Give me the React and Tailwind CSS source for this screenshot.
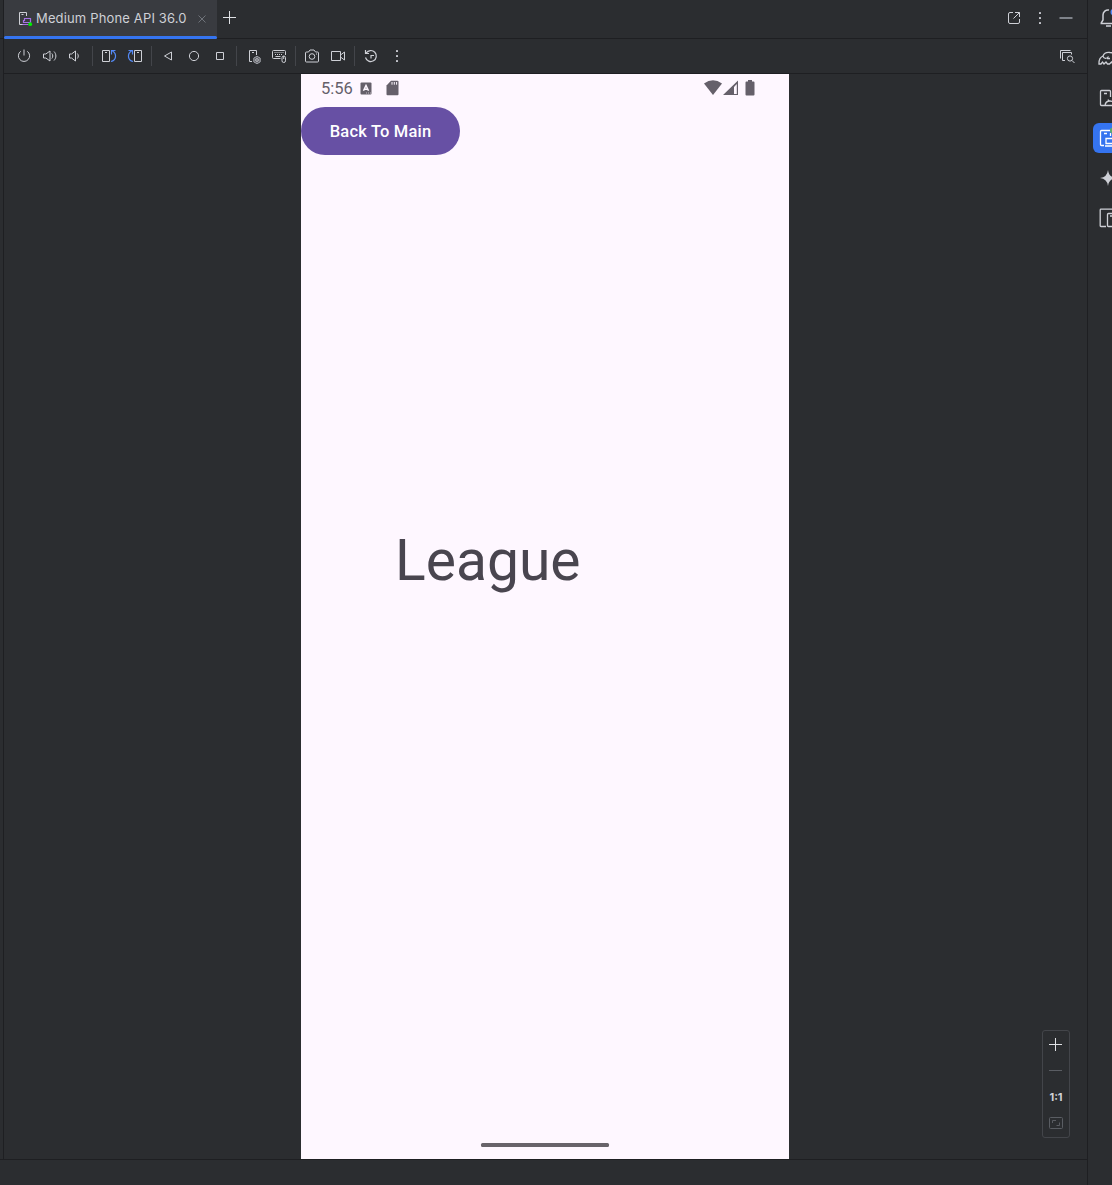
function Icon({ children, size = 16, color = "text-[#ced0d6]", className = "" }) {
  return (
    <svg
      width={size}
      height={size}
      viewBox={`0 0 ${size} ${size}`}
      fill="none"
      stroke="currentColor"
      strokeWidth="1"
      className={`block shrink-0 ${color} ${className}`}
    >
      {children}
    </svg>
  );
}

function Separator() {
  return <div className="mx-2 h-5 w-px shrink-0 bg-[#43454a]" />;
}

function Group({ children }) {
  return <div className="flex items-center gap-2.5">{children}</div>;
}

function DotsVertical() {
  return (
    <Icon>
      <g fill="currentColor" stroke="none">
        <rect x="7" y="2" width="2" height="2" rx=".4" />
        <rect x="7" y="7" width="2" height="2" rx=".4" />
        <rect x="7" y="12" width="2" height="2" rx=".4" />
      </g>
    </Icon>
  );
}

function TabBar() {
  return (
    <div className="flex h-[39px] items-start border-b border-[#1e1f22]">
      <div className="relative flex h-[39px] w-[213px] shrink-0 items-start bg-[#393b40] pl-[13px] pt-[10px]">
        <Icon className="mt-px">
          <path d="M6 13.500H2.500v-12h7V5M4.500 3.500h2" />
          <path d="M7.500 7.500h6v4h-7v-2h1zM5.500 13.500h6" stroke="#a571e6" strokeWidth="1.200" />
          <circle cx="13.200" cy="13.200" r="1.900" fill="#00f000" stroke="none" />
        </Icon>
        <span className="ml-[3px] w-[155px] whitespace-nowrap font-['Inter',sans-serif] text-[13px] leading-4 tracking-[0.150px] text-[#ced0d6]">
          Medium Phone API 36.0
        </span>
        <Icon className="ml-[3px] mt-px" color="text-[#6f737a]">
          <path d="M4.500 4.500l7 7M11.500 4.500l-7 7" />
        </Icon>
        <div className="absolute inset-x-0 bottom-0 h-[3px] rounded-full bg-[#3574f0]" />
      </div>
      <Icon className="ml-[5px] mt-[10px]" color="text-[#dfe1e5]">
        <path d="M7.500 1v13M1 7.500h13" />
      </Icon>
      <div className="ml-auto mr-[13px] mt-[10px] flex gap-2.5">
        <Icon>
          <path d="M7 2.500H4A1.500 1.500 0 0 0 2.500 4v8A1.500 1.500 0 0 0 4 13.500h8a1.500 1.500 0 0 0 1.500-1.500V9M9 2.500h4.500V7M13.500 2.500l-6 6" />
        </Icon>
        <DotsVertical />
        <Icon color="text-[#9da0a8]">
          <path d="M1.500 8h13" strokeWidth="1.5" />
        </Icon>
      </div>
    </div>
  );
}

function Toolbar() {
  return (
    <div className="flex h-[35px] items-center border-b border-[#1e1f22] pl-3 pr-3">
      <Group>
        <Icon>
          <path d="M4.700 3.300a5.600 5.600 0 1 0 6.600 0M8 1.500v6" />
        </Icon>
        <Icon>
          <path d="M1.500 6v4h2.300L8 13V3L3.800 6zM9.800 5.500c1.300 1.500 1.300 3.500 0 5M12 3.500c2.500 2.700 2.500 6.300 0 9" />
        </Icon>
        <Icon>
          <path d="M1.500 6v4h2l4 3V3l-4 3zM9.300 5.500c1.300 1.500 1.300 3.500 0 5" />
        </Icon>
      </Group>
      <Separator />
      <Group>
        <Icon>
          <path d="M1.500 2.500h7v11h-7zM4 4.500h2" />
          <path d="M10 13.500c5.500-1.500 6-7.500 1.500-10.500M10.500 6.500V2.500h4" stroke="#548af7" strokeWidth="1.200" />
        </Icon>
        <Icon>
          <path d="M7.500 2.500h7v11h-7zM10 4.500h2" />
          <path d="M6 13.500C.5 12 0 6 4.500 3M5.500 6.500V2.500h-4" stroke="#548af7" strokeWidth="1.200" />
        </Icon>
      </Group>
      <Separator />
      <Group>
        <Icon><path d="M4.500 8l7-4v8z" /></Icon>
        <Icon><circle cx="8" cy="8" r="4.600" /></Icon>
        <Icon><path d="M4.500 4.500h7v7h-7z" /></Icon>
      </Group>
      <Separator />
      <Group>
        <Icon>
          <path d="M7 13.500H4.500v-11h7V7M7 4.500h2" />
          <path d="M12 8.300l3.200 1.800v3.800L12 15.700l-3.200-1.800v-3.800z" fill="#606268" stroke="#a2a4aa" />
          <circle cx="12" cy="12" r="1.300" fill="#2b2d30" />
        </Icon>
        <Icon>
          <path d="M9.500 10.500h-7a1 1 0 0 1-1-1v-6a1 1 0 0 1 1-1h11a1 1 0 0 1 1 1V7" />
          <path d="M3.500 4.500h9M4 6.500h8" strokeDasharray="1 1" />
          <path d="M4.500 8.500h5" />
          <rect x="11" y="8" width="3.500" height="6.500" rx="1.700" />
          <path d="M12.700 8v3" />
        </Icon>
      </Group>
      <Separator />
      <Group>
        <Icon>
          <path d="M1.500 5a1 1 0 0 1 1-1h2l1.500-2h4l1.500 2h2a1 1 0 0 1 1 1v8a1 1 0 0 1-1 1h-11a1 1 0 0 1-1-1z" />
          <circle cx="8" cy="8.500" r="2.800" />
          <path d="M12 6h1" />
        </Icon>
        <Icon>
          <path d="M1.500 3.500h9v9h-9zM10.500 7l4-3v8l-4-3" />
        </Icon>
      </Group>
      <Separator />
      <Group>
        <Icon>
          <path d="M3.200 5a5.500 5.500 0 1 1-.7 4.500M2.500 2v3.500H6M8 10.500v-3h3" strokeWidth="1.200" />
        </Icon>
        <DotsVertical />
      </Group>
      <Icon className="ml-auto">
        <path d="M1.500 10.500v-8h10M6 12.500H3.500v-8h9v2" />
        <circle cx="11" cy="10.500" r="2.600" />
        <path d="M13 12.500l2.500 2.500" />
      </Icon>
    </div>
  );
}

function StatusBar() {
  return (
    <div className="flex h-[33px] items-start pl-5 pr-[34px] pt-[6px] text-[#65606a]">
      <span className="w-[33px] whitespace-nowrap font-['Roboto',sans-serif] text-[16.500px] leading-[18px]">
        5:56
      </span>
      <svg width="12" height="13" viewBox="0 0 12 13" className="ml-[6px] mt-[2px]">
        <rect x=".5" y=".5" width="11" height="12" rx="1" fill="currentColor" />
        <path d="M3.500 8.800L6 3.500l2.500 5.300M4.500 7.300h3" fill="none" stroke="#fef7ff" strokeWidth="1.500" />
        <path d="M6 11h5" stroke="#fef7ff" strokeWidth=".6" strokeDasharray="1 1" />
      </svg>
      <svg width="13" height="16" viewBox="0 0 13 16" className="ml-[14px]">
        <path d="M5 .8h6.500q1 0 1 1v12.400q0 1-1 1h-10q-1 0-1-1V5.500z" fill="currentColor" />
        <path d="M6 2v2.700M8.300 2v2.700M10.600 2v2.700" stroke="#fef7ff" strokeWidth="1" />
      </svg>
      <svg width="18" height="16" viewBox="0 0 18 16" className="ml-auto">
        <path d="M0 3.500Q9-3 18 3.500L9 15z" fill="currentColor" />
      </svg>
      <svg width="16" height="16" viewBox="0 0 16 16" className="ml-px">
        <path d="M15 .5V15H0zM11 7v7h2.800V4z" fill="currentColor" fillRule="evenodd" />
      </svg>
      <svg width="10" height="16" viewBox="0 0 10 16" className="ml-[6px]">
        <path d="M3 0h4v1.500h1.500q1 0 1 1v12q0 1-1 1h-7q-1 0-1-1v-12q0-1 1-1H3z" fill="currentColor" />
      </svg>
    </div>
  );
}

function PhoneScreen() {
  return (
    <div className="flex h-[1085px] w-[488px] flex-col bg-[#fef7ff]">
      <StatusBar />
      <button className="flex h-12 w-[159px] items-center justify-center rounded-full bg-[#6750a4] pt-[2px] font-['Roboto',sans-serif] text-[16.500px] font-medium tracking-[0.180px] text-white">
        Back To Main
      </button>
      <div className="ml-[94px] mt-[372px] font-['Roboto',sans-serif] text-[57px] leading-[68px] text-[#49454f]">
        League
      </div>
      <div className="mx-auto mb-3 mt-auto h-1 w-32 rounded-[1.500px] bg-[#68636a]" />
    </div>
  );
}

function ZoomControls() {
  return (
    <div className="mb-[21px] mr-[17px] flex h-[108px] w-7 flex-col items-center rounded-[3px] border border-[#43454a] pt-[6px]">
      <Icon color="text-[#dfe1e5]"><path d="M7.500 1v13M1 7.500h13" /></Icon>
      <Icon className="mt-[10px]" color="text-[#5a5d63]"><path d="M1 7.500h13" /></Icon>
      <span className="mt-[10px] h-4 font-['Inter',sans-serif] text-[11px] font-bold leading-4 text-[#ced0d6]">1:1</span>
      <Icon className="mt-[10px]" color="text-[#5a5d63]">
        <rect x="1.500" y="2.500" width="13" height="11" rx="1" />
        <path d="M4.500 8V5.500H8M11.500 7.500v3H8.500" />
      </Icon>
    </div>
  );
}

function SideButton({ active, children }) {
  return (
    <div className={`flex h-[30px] w-[30px] shrink-0 items-center justify-center rounded-[6px] ${active ? "bg-[#3574f0]" : ""}`}>
      <svg width="20" height="20" viewBox="0 0 20 20" fill="none" stroke={active ? "#ffffff" : "#ced0d6"} strokeWidth="1.300">
        {children}
      </svg>
    </div>
  );
}

function SideRail() {
  return (
    <div className="flex w-6 shrink-0 flex-col gap-2.5 overflow-hidden pl-[5px] pt-[3px]">
      <SideButton>
        <path d="M2.500 15.500h15M3 15.300l2-3.300V7a5 5 0 0 1 6-5M8 18h5" strokeWidth="1.500" />
        <circle cx="16" cy="4" r="3.500" fill="#548af7" stroke="none" />
      </SideButton>
      <SideButton>
        <path d="M1 16C.8 11.500 2.500 9 5 8c1-2.700 3.500-4 7-3.500 4 0 6 3 6 6.500v5h-3l-1.500-2-2 2H9.500L8 14l-2 2-1.500-2L3 16zM5 8c.5 3 4 3 5.500.5M9 10.500h3" />
      </SideButton>
      <SideButton>
        <path d="M7 17.500H3.500a1 1 0 0 1-1-1v-13a1 1 0 0 1 1-1h8a1 1 0 0 1 1 1V9M6 5.500h3M7 17.500c.3-2.700 2-4.500 5-4.500s5 2 5 4.500zM10 11.500l1 1.500" />
      </SideButton>
      <SideButton active>
        <path d="M6 17.500H3.500a1 1 0 0 1-1-1v-13a1 1 0 0 1 1-1H12M12.500 5v3M6 5.500h3M8 10.500h9v5H8zM7 18h11" />
        <circle cx="15" cy="2.500" r="3" fill="#5fad65" stroke="none" />
      </SideButton>
      <SideButton>
        <path d="M10 2q.8 7.200 8 8-7.200.8-8 8-.8-7.200-8-8 7.200-.8 8-8z" fill="#ced0d6" stroke="none" />
      </SideButton>
      <SideButton>
        <path d="M8 18.500H3a.8.8 0 0 1-.8-.8V2a.8.8 0 0 1 .8-.8h12.500V4M10.500 5.500H17v13h-6.500a1 1 0 0 1-1-1v-11a1 1 0 0 1 1-1zM12 8h3" />
      </SideButton>
    </div>
  );
}

export default function App() {
  return (
    <div className="flex h-[1185px] w-[1112px] overflow-hidden bg-[#2b2d30]">
      <div className="flex w-[1088px] shrink-0 flex-col border-r border-[#1e1f22]">
        <div className="flex h-[1159px] shrink-0">
          <div className="w-1 shrink-0 border-r border-[#1e1f22]">
            <div className="h-[39px] border-b border-[#1e1f22]" />
          </div>
          <div className="flex min-w-0 flex-1 flex-col">
            <TabBar />
            <Toolbar />
            <div className="flex flex-1 items-end">
              <div className="w-[297px] shrink-0" />
              <PhoneScreen />
              <div className="flex flex-1 justify-end">
                <ZoomControls />
              </div>
            </div>
          </div>
        </div>
        <div className="flex-1 border-t border-[#1e1f22]" />
      </div>
      <SideRail />
    </div>
  );
}
